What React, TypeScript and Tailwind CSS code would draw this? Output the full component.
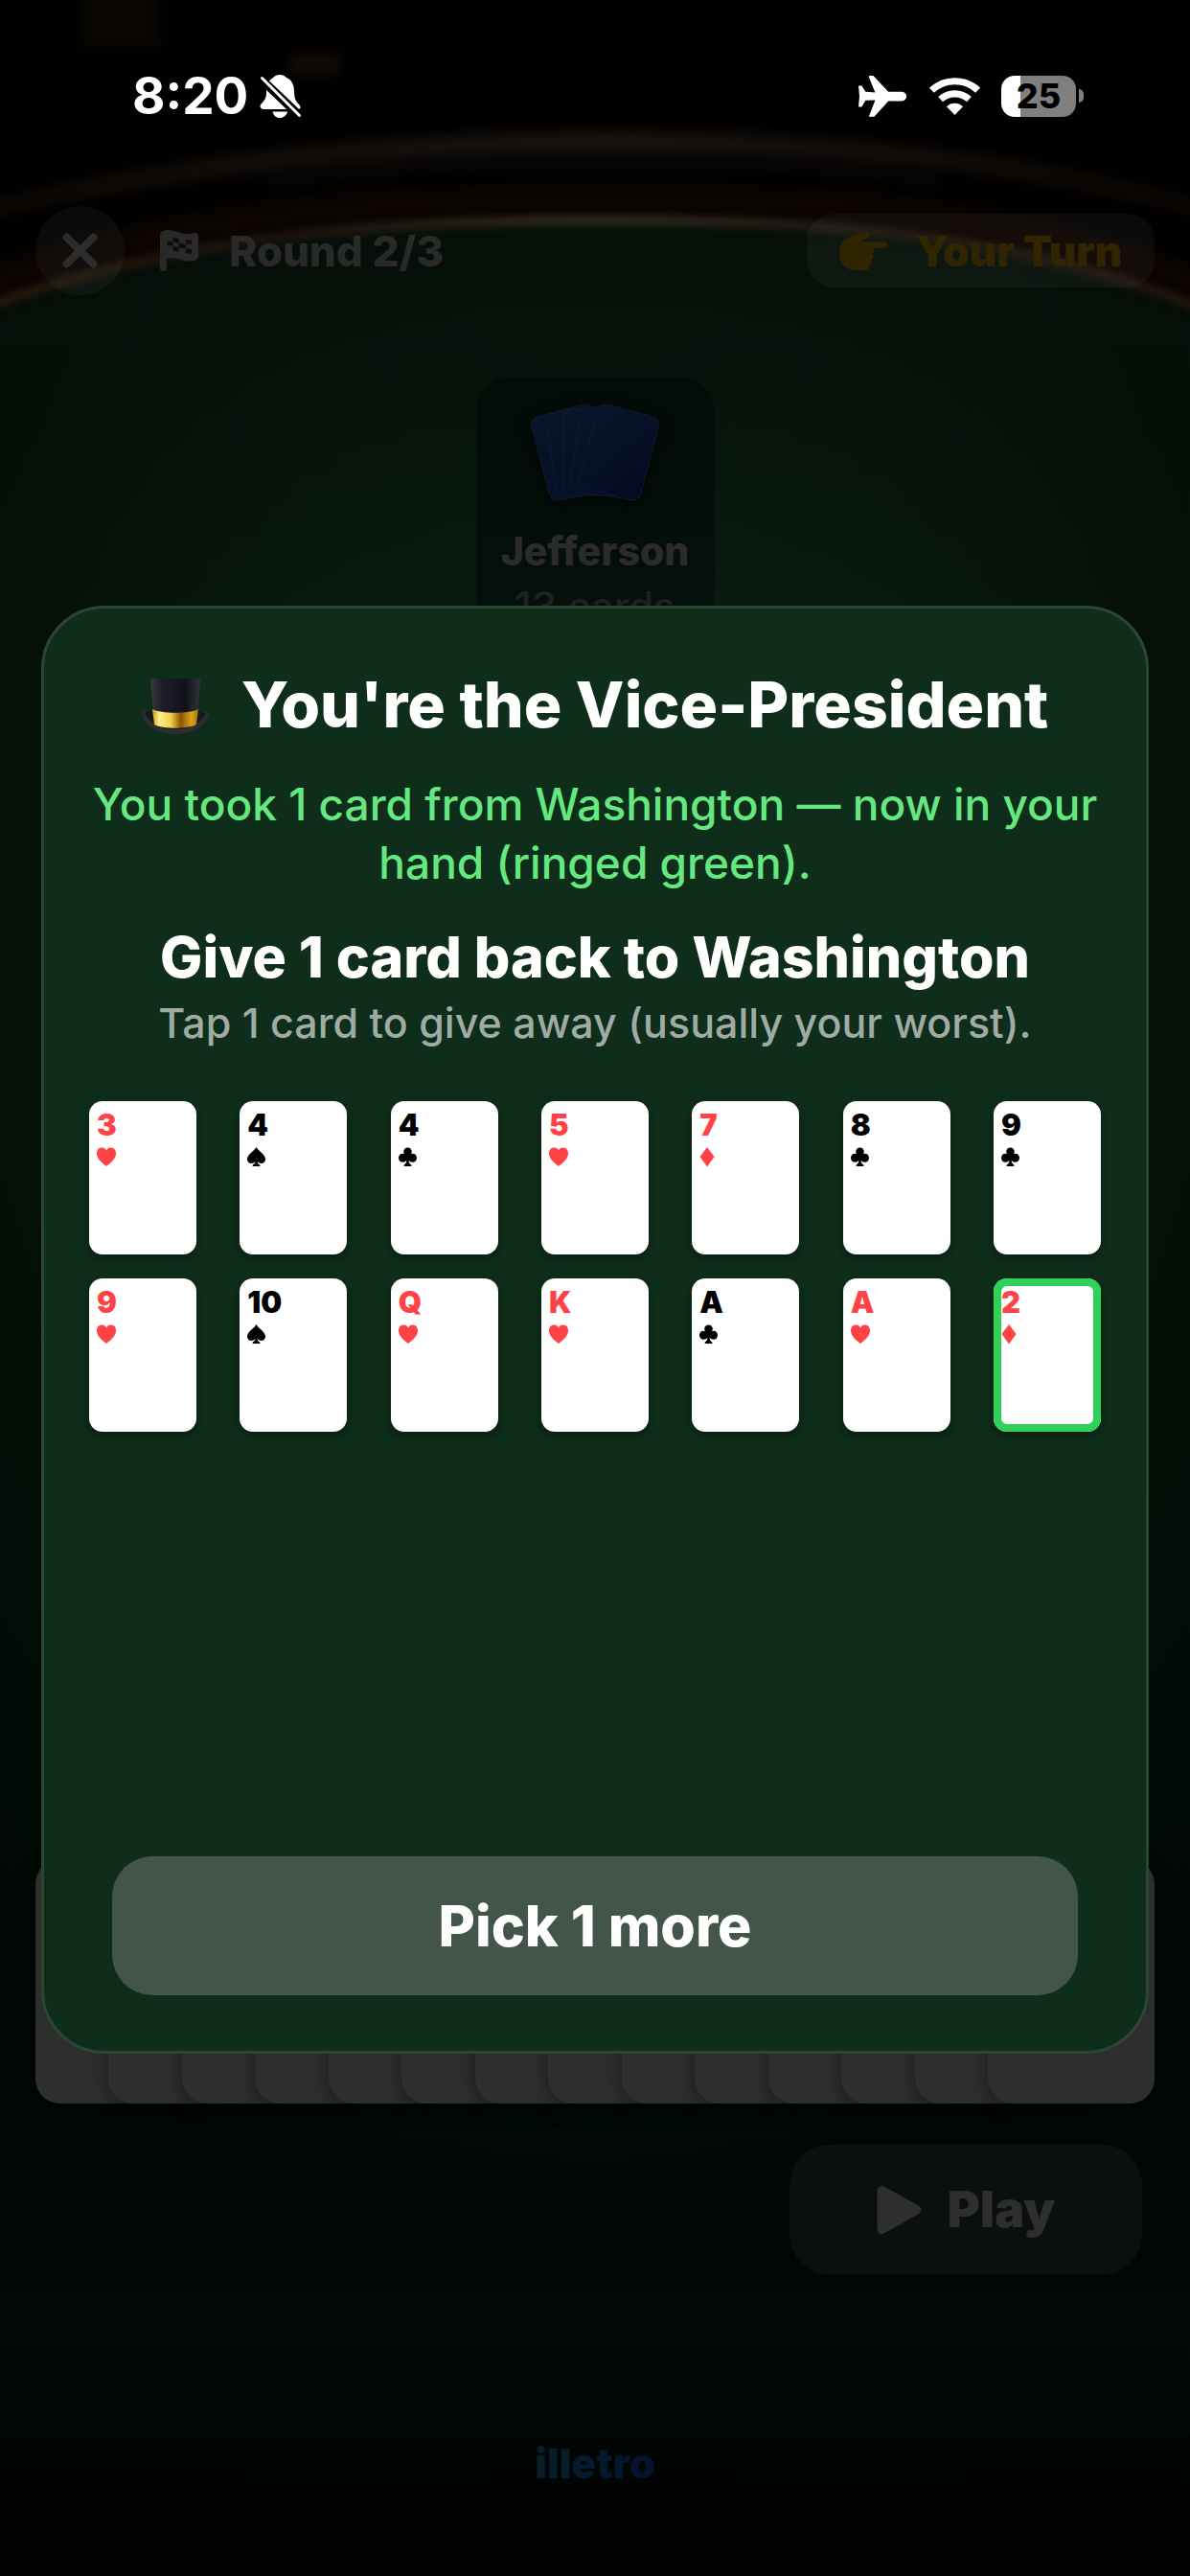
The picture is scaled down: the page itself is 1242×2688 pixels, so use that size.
import type { ReactNode } from "react";

type Suit = "hearts" | "spades" | "clubs" | "diamonds";
type PlayingCard = { rank: string; suit: Suit; received?: boolean };

const cards: PlayingCard[] = [
  { rank: "3", suit: "hearts" },
  { rank: "4", suit: "spades" },
  { rank: "4", suit: "clubs" },
  { rank: "5", suit: "hearts" },
  { rank: "7", suit: "diamonds" },
  { rank: "8", suit: "clubs" },
  { rank: "9", suit: "clubs" },
  { rank: "9", suit: "hearts" },
  { rank: "10", suit: "spades" },
  { rank: "Q", suit: "hearts" },
  { rank: "K", suit: "hearts" },
  { rank: "A", suit: "clubs" },
  { rank: "A", suit: "hearts" },
  { rank: "2", suit: "diamonds", received: true },
];

const suitShapes: Record<Suit, ReactNode> = {
  hearts: <path d="M10 20C5 16 0 12 0 6.5C0 2.500 2.500 0.500 5.300 0.500C7.600 0.500 9.200 1.800 10 3.600C10.800 1.800 12.400 0.500 14.700 0.500C17.500 0.500 20 2.500 20 6.500C20 12 15 16 10 20Z" />,
  spades: (
    <path d="M9.500 0C11 3.500 19 7.500 19 12.500C19 15.300 17 17 14.700 17C13 17 11.500 16.300 10.600 15C10.800 17 11.800 18 13.300 18.600V20H5.700V18.600C7.200 18 8.200 17 8.400 15C7.500 16.300 6 17 4.300 17C2 17 0 15.300 0 12.500C0 7.500 8 3.500 9.500 0Z" />
  ),
  clubs: (
    <path d="M9.500 0.500C12 0.500 13.800 2.300 13.800 4.600C13.800 5.600 13.500 6.500 13 7.200C13.600 7 14.200 6.800 14.800 6.800C17.200 6.800 19 8.700 19 11.200C19 13.800 17.200 15.800 14.700 15.800C13 15.800 11.500 15 10.600 13.600C10.800 16.200 11.600 17.800 13.300 18.600V20H5.700V18.600C7.400 17.800 8.200 16.200 8.400 13.600C7.500 15 6 15.800 4.300 15.800C1.800 15.800 0 13.800 0 11.200C0 8.700 1.800 6.800 4.200 6.800C4.800 6.800 5.400 7 6 7.200C5.500 6.500 5.200 5.600 5.200 4.600C5.200 2.300 7 0.500 9.500 0.500Z" />
  ),
  diamonds: <path d="M8 0L15.500 10L8 20.500L0.500 10Z" />,
};

const isRed = (suit: Suit) => suit === "hearts" || suit === "diamonds";

function TableBackdrop() {
  return (
    <svg
      aria-hidden="true"
      className="absolute inset-0 h-full w-full"
      viewBox="0 0 1242 2688"
      preserveAspectRatio="none"
    >
      <defs>
        <radialGradient id="felt" gradientUnits="userSpaceOnUse" cx="621" cy="850" r="1" gradientTransform="translate(621 850) scale(1000 1500) translate(-621 -850)">
          <stop offset="0" stopColor="#0c2216" />
          <stop offset="0.35" stopColor="#081a10" />
          <stop offset="0.600" stopColor="#051008" />
          <stop offset="1" stopColor="#010804" />
        </radialGradient>
        <linearGradient id="fade" x1="0" y1="0" x2="0" y2="1">
          <stop offset="0" stopColor="#050e08" stopOpacity="0.900" />
          <stop offset="0.200" stopColor="#050e08" stopOpacity="0" />
          <stop offset="0.800" stopColor="#010502" stopOpacity="0" />
          <stop offset="1" stopColor="#010301" stopOpacity="1" />
        </linearGradient>
        <linearGradient id="rail" x1="0" y1="0" x2="1" y2="0">
          <stop offset="0" stopColor="#0a0603" />
          <stop offset="0.500" stopColor="#1b130e" />
          <stop offset="1" stopColor="#080402" />
        </linearGradient>
        <linearGradient id="lip" x1="0" y1="0" x2="1" y2="0">
          <stop offset="0" stopColor="#21160b" />
          <stop offset="0.250" stopColor="#1a120b" />
          <stop offset="0.500" stopColor="#29261c" />
          <stop offset="0.750" stopColor="#1a120c" />
          <stop offset="1" stopColor="#1f140d" />
        </linearGradient>
        <filter id="soft" x="-5%" y="-50%" width="110%" height="200%" colorInterpolationFilters="sRGB">
          <feGaussianBlur stdDeviation="6" />
        </filter>
        <filter id="edge" x="-5%" y="-50%" width="110%" height="200%" colorInterpolationFilters="sRGB">
          <feGaussianBlur stdDeviation="3" />
        </filter>
      </defs>
      <rect width="1242" height="2688" fill="#010101" />
      <g filter="url(#soft)">
        <rect x="84" y="-10" width="84" height="62" fill="#080502" />
        <rect x="302" y="56" width="54" height="22" fill="#100a04" />
        <path d="M-20 220C220 165 420 148 640 148S1060 165 1262 220" fill="none" stroke="url(#rail)" strokeWidth="22" />
        <path d="M280 190C420 172 520 170 640 170S880 174 980 190" fill="none" stroke="#0d0b0c" strokeWidth="6" />
        <path d="M-20 300C200 218 420 210 640 210S1060 218 1262 302" fill="none" stroke="#0b0401" strokeWidth="36" />
      </g>
      <path d="M-20 322C200 240 420 230 640 230S1060 242 1262 325V2688H-20Z" fill="url(#felt)" />
      <path d="M-20 322C200 240 420 230 640 230S1060 242 1262 325V2688H-20Z" fill="url(#fade)" />
      <path d="M-20 322C200 240 420 230 640 230S1060 242 1262 325" fill="none" stroke="url(#lip)" strokeWidth="12" filter="url(#edge)" />
    </svg>
  );
}

function BellSlash() {
  return (
    <svg aria-label="Silent mode" viewBox="0 0 45 45" className="h-[45px] w-[45px]" fill="#fff">
      <path d="M21 0C24 0 26 1 28 3C33 5 36 10 36 17C36 25 38 28 41.500 31.500C43.500 33.500 42.500 36 40 36H5C1 36-1 33 2 30C7 25 7 22 7 17C7 10 10 5 14 3C16 1 18 0 21 0Z" />
      <path d="M13.500 38.500H29C28 42.500 25 45 21 45S14.500 42.500 13.500 38.500Z" />
      <path d="M0 3L44 45" stroke="#000" strokeWidth="9" />
      <path d="M2.500 3.500L41.500 42.500" stroke="#fff" strokeWidth="3" strokeLinecap="round" />
    </svg>
  );
}

function StatusBar() {
  return (
    <div className="flex h-[200px] items-center justify-between pr-[111px] pl-[138px] text-white">
      <div className="flex items-center gap-3">
        <span className="text-[53px] leading-none font-bold">8:20</span>
        <BellSlash />
      </div>
      <div className="flex items-center">
        <svg aria-label="Airplane mode" viewBox="0 0 149 128" className="h-[43px] w-[50px]" fill="#fff">
          <path d="M134 50C144 50 149 58 149 64C149 72 143 79 133 79H93L49 127H32L52 76L22 77L10 97H0L3 64L0 31H10L22 50L52 52L32 4Q31 0 36 0H46L93 50Z" />
        </svg>
        <svg aria-label="Wi-Fi" viewBox="0 0 154 115" className="ml-6 h-[39px] w-[53px]" fill="none" stroke="#fff" strokeWidth="21">
          <path d="M6 39A104 104 0 0 1 148 39" />
          <path d="M33 67A65 65 0 0 1 121 67" />
          <path d="M52 89A36 36 0 0 1 102 89L77 115Z" fill="#fff" stroke="none" />
        </svg>
        <div className="ml-[22px] flex h-[43px] w-[78px] items-center justify-center rounded-[14px] bg-[linear-gradient(to_right,#fff_20px,#7f7f7f_20px)] text-[36px] leading-none font-extrabold text-black">
          25
        </div>
        <div className="ml-[3px] h-[14px] w-[5px] rounded-r-full bg-[#7f7f7f]" />
      </div>
    </div>
  );
}

function Header() {
  return (
    <header className="mt-[15px] flex items-center justify-between px-[37px]">
      <div className="flex items-center">
        <button aria-label="Close" className="flex size-[93px] items-center justify-center rounded-full bg-white/4">
          <svg viewBox="0 0 37 37" className="size-[37px]" stroke="#2c2c2c" strokeWidth="8" strokeLinecap="round">
            <path d="M4.500 4.500L32.500 32.500M32.500 4.500L4.500 32.500" />
          </svg>
        </button>
        <svg aria-hidden="true" viewBox="0 0 121 130" className="ml-[37px] h-[43px] w-[40px]">
          <path
            fill="#292929"
            d="M0 14C0 5 10 0 28 0C48 0 62 12 82 12C98 12 102 9 110 9C117 9 121 13 121 20V82C121 94 108 99 92 99C68 99 58 88 36 88C28 88 24 89 21 90V120Q21 130 10.500 130T0 120Z"
          />
          <path
            fill="#120b06"
            d="M41 23L60 28V41L41 37ZM81 31H100V44L81 46ZM23 35L41 37V51L23 48ZM60 41L81 46V59L60 55ZM41 51L60 55V68L41 65ZM81 59L100 60V75L81 74Z"
          />
        </svg>
        <span className="ml-8 text-[44px] leading-none font-extrabold text-[#292929]">Round 2/3</span>
      </div>
      <div className="flex h-[77px] items-center rounded-[28px] bg-white/4 px-[34px] text-[#302500]">
        <svg aria-hidden="true" viewBox="0 0 148 121" className="h-[41px] w-[50px]" fill="currentColor">
          <path d="M38 16L78 2C92 -2 101 10 91 18L68 33H138C151 33 151 53 138 53H98C112 53 111 69 100 71C109 73 107 87 96 88C104 91 101 102 90 103C96 109 92 121 80 121H48C18 121 0 98 0 68C0 42 12 25 38 16Z" />
        </svg>
        <span className="ml-[30px] text-[44px] leading-none font-black">Your Turn</span>
      </div>
    </header>
  );
}

function CardFan() {
  const fan = [
    { x: 44, angle: -15 },
    { x: 56, angle: -8 },
    { x: 68, angle: 0 },
    { x: 81, angle: 8 },
    { x: 94, angle: 15 },
  ];
  return (
    <svg aria-hidden="true" viewBox="0 0 138 104" className="h-[104px] w-[138px] overflow-visible drop-shadow-[0_6px_8px_rgba(0,0,0,0.600)]">
      <defs>
        <linearGradient id="card-back" x1="0" y1="0" x2="1" y2="1">
          <stop offset="0" stopColor="#08152b" />
          <stop offset="1" stopColor="#030a22" />
        </linearGradient>
      </defs>
      {fan.map(({ x, angle }) => (
        <rect
          key={angle}
          x={x - 33}
          y="7"
          width="66"
          height="90"
          rx="9"
          fill="url(#card-back)"
          stroke="#101a2b"
          transform={`rotate(${angle} ${x} 52)`}
        />
      ))}
    </svg>
  );
}

function TopHat() {
  return (
    <svg aria-hidden="true" viewBox="0 0 70 62" className="h-[62px] w-[70px]">
      <defs>
        <linearGradient id="hat-body" x1="0" y1="0" x2="1" y2="0">
          <stop offset="0" stopColor="#3a3a42" />
          <stop offset="0.250" stopColor="#1d1d25" />
          <stop offset="0.700" stopColor="#12121a" />
          <stop offset="1" stopColor="#33333b" />
        </linearGradient>
        <linearGradient id="hat-band" x1="0" y1="0" x2="1" y2="0">
          <stop offset="0" stopColor="#c79a1e" />
          <stop offset="0.150" stopColor="#fdf08a" />
          <stop offset="0.400" stopColor="#f1cf4a" />
          <stop offset="0.620" stopColor="#8d5203" />
          <stop offset="0.850" stopColor="#d9a51a" />
          <stop offset="1" stopColor="#a8740a" />
        </linearGradient>
      </defs>
      <g transform="translate(0 4)">
        <path d="M4 34C0 33-1 38 2 43C8 53 21 58 35 58S62 53 68 43C71 38 70 33 66 34C62 37 58 44 35 44S8 37 4 34Z" fill="#2c2c31" />
        <path d="M3 36C7 45 18 53 35 53S63 45 67 36L60 34H10Z" fill="#17171c" />
        <path d="M9 3Q9 0 13 0H57Q61 0 61 3L58 36C50 42 20 42 12 36Z" fill="url(#hat-body)" />
        <path d="M11 32C20 37 50 37 59 32L57 48C48 53 22 53 13 48Z" fill="url(#hat-band)" />
      </g>
    </svg>
  );
}

function CardButton({ card }: { card: PlayingCard }) {
  return (
    <button
      aria-label={`${card.rank} of ${card.suit}`}
      className={`flex h-40 w-28 flex-col items-start rounded-[14px] bg-white px-2 pt-[10px] shadow-[0_4px_10px_rgba(0,0,0,0.35)] ${
        isRed(card.suit) ? "text-[#ff4245]" : "text-black"
      } ${card.received ? "inset-ring-8 inset-ring-[#30d158]" : ""}`}
    >
      <span className="text-[31px] leading-[30px] font-black">{card.rank}</span>
      <svg aria-hidden="true" viewBox="0 0 20 21" className="mt-2 h-[21px] w-5" fill="currentColor">
        {suitShapes[card.suit]}
      </svg>
    </button>
  );
}

function ExchangeDialog() {
  return (
    <div className="absolute inset-0 flex items-center px-[43px] pt-[86px]">
      <section
        role="dialog"
        aria-labelledby="dialog-title"
        className="flex w-full flex-col rounded-[66px] border-[3px] border-[#2a4734] bg-[#0e2d1a] px-[47px] pt-[60px] pb-[58px] text-center text-white"
      >
        <h1 id="dialog-title" className="flex h-20 items-center justify-center gap-[34px] text-[66px] leading-20 font-extrabold">
          <TopHat />
          You're the Vice-President
        </h1>
        <p className="mt-[34px] text-[46px] leading-[61px] font-medium text-[#66e880]">
          You took 1 card from Washington — now in your hand (ringed green).
        </p>
        <h2 className="mt-8 text-[59px] leading-[72px] font-extrabold">Give 1 card back to Washington</h2>
        <p className="mt-1 text-[43px] leading-[56px] font-medium text-[#9faba3]">Tap 1 card to give away (usually your worst).</p>
        <div className="mt-[54px] min-h-[788px]">
          <div className="grid grid-cols-[repeat(7,112px)] justify-between gap-y-[25px]">
            {cards.map((card) => (
              <CardButton key={card.rank + card.suit} card={card} />
            ))}
          </div>
        </div>
        <button className="mx-6 h-[145px] rounded-[42px] bg-[#425548] text-[59px] leading-none font-extrabold">Pick 1 more</button>
      </section>
    </div>
  );
}

export default function App() {
  return (
    <main className="relative flex min-h-screen flex-col overflow-hidden bg-black font-['Inter',sans-serif]">
      <TableBackdrop />
      <div className="relative flex flex-1 flex-col">
        <StatusBar />
        <Header />
        <section className="mx-auto mt-[84px] flex w-[251px] flex-col items-center rounded-[36px] border-2 border-white/2 bg-black/40 pt-[26px] pb-8">
          <CardFan />
          <h3 className="mt-[26px] text-[41px] leading-[50px] font-extrabold text-[#2b2b2b]">Jefferson</h3>
          <p className="mt-2 text-[42px] leading-[50px] font-medium text-[#1d211f]">13 cards</p>
        </section>
        <div className="flex-1" />
        <div className="flex px-[37px]">
          {cards.map((card, index) => (
            <div
              key={card.rank + card.suit}
              className={`h-[255px] rounded-[26px] bg-[#2e2e2e] shadow-[0_4px_20px_rgba(0,0,0,0.45)] ${
                index === 0 ? "w-[173px] shrink-0" : "-ml-[97px] min-w-0 flex-1 basis-[173px]"
              }`}
            />
          ))}
        </div>
        <button className="mt-[43px] mr-[50px] flex h-[136px] w-[368px] items-center justify-center gap-[27px] self-end rounded-[42px] bg-white/4 text-[#2e2e2e]">
          <svg aria-hidden="true" viewBox="0 0 47 52" className="h-[52px] w-[47px]" fill="currentColor" stroke="currentColor" strokeWidth="10" strokeLinejoin="round">
            <path d="M5.500 6V46L41.500 26Z" />
          </svg>
          <span className="text-[52px] leading-none font-black">Play</span>
        </button>
        <div className="mt-[13px] h-[154px] bg-white/1" />
        <footer className="h-[147px] pt-1 text-center">
          <a href="#illetro" className="inline-block bg-linear-to-r from-[#06202b] to-[#04122e] bg-clip-text text-[43px] leading-[50px] font-black text-transparent">
            illetro
          </a>
        </footer>
      </div>
      <ExchangeDialog />
    </main>
  );
}
